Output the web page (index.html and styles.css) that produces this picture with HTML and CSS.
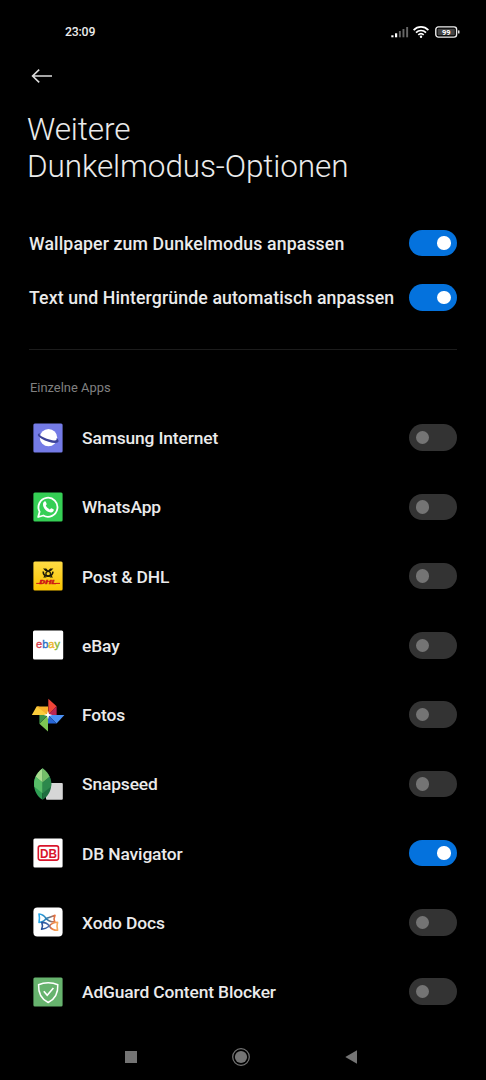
FILE: index.html
```html
<!DOCTYPE html>
<html lang="de">
<head>
    <meta charset="UTF-8">
    <meta name="viewport" content="width=device-width, initial-scale=1.0">
    <title>Weitere Dunkelmodus-Optionen</title>
    <link rel="stylesheet" href="styles.css">
</head>
<body>
    <div class="status-bar">
        <span class="time">23:09</span>
        <div class="status-icons">
            <svg width="18" height="12" viewBox="0 0 18 12">
                <rect x="0.3" y="9.3" width="2.2" height="2" fill="#fff"/>
                <rect x="4" y="7.3" width="2.2" height="4" fill="#fff"/>
                <rect x="7.9" y="5" width="1.9" height="6.3" fill="#666"/>
                <rect x="11.5" y="3" width="1.9" height="8.3" fill="#666"/>
                <rect x="15.2" y="1" width="1.9" height="10.3" fill="#666"/>
            </svg>
            <svg class="wifi" width="16" height="12" viewBox="0 0 16 12">
                <g fill="none" stroke="#fff" stroke-width="1.7">
                    <path d="M0.6 4.1C4.8 -0.2 11.2 -0.2 15.4 4.1"/>
                    <path d="M3 6.6C5.8 3.8 10.2 3.8 13 6.6"/>
                    <path d="M5.3 8.9C6.9 7.4 9.1 7.4 10.7 8.9"/>
                </g>
                <circle cx="8" cy="10.7" r="1.2" fill="#fff"/>
            </svg>
            <svg class="battery" width="25" height="12" viewBox="0 0 25 12">
                <rect x="0.8" y="0.9" width="20.8" height="10.2" rx="2.6" fill="none" stroke="#eee" stroke-width="1.4"/>
                <rect x="2.6" y="2.7" width="17.2" height="6.6" rx="0.8" fill="#444"/>
                <rect x="23" y="4.3" width="1.5" height="3.2" rx="0.6" fill="#ddd"/>
                <text x="11.2" y="8.6" text-anchor="middle" class="battery-text">99</text>
            </svg>
        </div>
    </div>

    <div class="header">
        <svg class="back" width="22" height="16" viewBox="0 0 22 16">
            <path d="M21 8H1.8M8.2 1.6L1.6 8L8.2 14.4" fill="none" stroke="#ddd" stroke-width="1.6"/>
        </svg>
        <h1>Weitere<br>Dunkelmodus-Optionen</h1>
    </div>

    <div class="options">
        <div class="option"><span>Wallpaper zum Dunkelmodus anpassen</span><div class="toggle on"></div></div>
        <div class="option"><span>Text und Hintergründe automatisch anpassen</span><div class="toggle on"></div></div>
    </div>

    <h2>Einzelne Apps</h2>

    <div class="apps">
        <div class="app">
            <svg width="34" height="34" viewBox="0 0 34 34">
                <rect x="2.4" y="2.4" width="29.2" height="29.2" rx="1.5" fill="#747be6"/>
                <circle cx="17.5" cy="16.6" r="8.7" fill="#fff"/>
                <path d="M9.2 12.6C5.6 12.4 6.2 15.2 10.6 17.8C16 21 24.5 23.2 27 21.3C28.4 20.2 27.3 18.4 25.3 17C26.2 18.8 25.4 19.6 23 19.4C18.5 19.1 12.8 17 9.6 14.8C8.4 13.9 8.3 13.1 9.2 12.6Z" fill="#3d4398"/>
            </svg>
            <span>Samsung Internet</span><div class="toggle"></div>
        </div>
        <div class="app">
            <svg width="34" height="34" viewBox="0 0 34 34">
                <rect x="2.4" y="2.4" width="29.2" height="29.2" rx="1.5" fill="#35cf55"/>
                <path d="M7.2 27L8.6 21.7A9.5 9.5 0 1 1 12.3 25.5Z" fill="none" stroke="#fff" stroke-width="1.8" stroke-linejoin="round"/>
                <path d="M13.4 11.6C14.1 11.1 14.6 11.3 14.9 12L15.7 13.9C15.9 14.5 15 15 14.8 15.6C15.6 17.4 16.9 18.6 18.7 19.4C19.4 19.1 19.8 18.1 20.4 18.2L22.5 19.3C23.3 19.8 22.4 22.3 19.9 22.5C16 22.4 12 18.3 12 14.6C12 13.3 12.5 12.2 13.4 11.6Z" fill="#fff"/>
            </svg>
            <span>WhatsApp</span><div class="toggle"></div>
        </div>
        <div class="app">
            <svg width="34" height="34" viewBox="0 0 34 34">
                <defs>
                    <linearGradient id="post" x1="0" y1="0" x2="0" y2="1"><stop offset="0" stop-color="#ffdc45"/><stop offset="1" stop-color="#fbc400"/></linearGradient>
                </defs>
                <rect x="2.4" y="2.4" width="29.2" height="29.2" rx="1.5" fill="url(#post)"/>
                <path d="M12 9.6H15.2L17.1 11.6L19.2 9.6H22.4L20 12.1H14.3Z" fill="#1d1a08"/>
                <path d="M12.2 12.6C12.2 15.8 14 17.2 16.8 17.2C19.8 17.2 21.6 15.6 22 12.6" fill="none" stroke="#1d1a08" stroke-width="1.6"/>
                <circle cx="17.2" cy="14.7" r="2.3" fill="none" stroke="#1d1a08" stroke-width="1.3"/>
                <path d="M13.6 16.6L12.2 18.6H15.6ZM20.4 16.6L22 18.6H18.6Z" fill="#1d1a08"/>
                <path d="M5.2 24.4H9.8M24.6 24.4H29" stroke="#cf1515" stroke-width="1"/>
                <text x="8.6" y="25.3" textLength="16.6" lengthAdjust="spacingAndGlyphs" class="dhl">DHL</text>
            </svg>
            <span>Post &amp; DHL</span><div class="toggle"></div>
        </div>
        <div class="app">
            <svg width="34" height="34" viewBox="0 0 34 34">
                <rect x="2" y="2.4" width="30.2" height="29.2" rx="1.5" fill="#fff"/>
                <text x="5" y="19.8" textLength="24" lengthAdjust="spacingAndGlyphs" class="ebay"><tspan fill="#d83c4b">e</tspan><tspan fill="#2c6fc4">b</tspan><tspan fill="#eeb52c">a</tspan><tspan fill="#8ab62f">y</tspan></text>
            </svg>
            <span>eBay</span><div class="toggle"></div>
        </div>
        <div class="app">
            <svg width="34" height="34" viewBox="0 0 34 34">
                <path d="M17.3 0.8V17L25.6 8.2Z" fill="#ef4438"/>
                <path d="M17 17L25.6 8.2V17Z" fill="#b92655"/>
                <path d="M33.4 17H17L25.6 25.6Z" fill="#4b91f5"/>
                <path d="M17 17L25.6 25.6H17Z" fill="#2765d6"/>
                <path d="M17 33.4V17L8.4 25.8Z" fill="#7cc653"/>
                <path d="M17 17L8.4 25.8V17Z" fill="#40954a"/>
                <path d="M0.8 17H17L8 8.6H5.6Z" fill="#fccd3c"/>
                <path d="M17 17L5.6 8.6H17Z" fill="#f7b02b"/>
                <path d="M17 12.8L18 16L21.2 17L18 18L17 21.2L16 18L12.8 17L16 16Z" fill="#fff"/>
            </svg>
            <span>Fotos</span><div class="toggle"></div>
        </div>
        <div class="app">
            <svg width="34" height="34" viewBox="0 0 34 34">
                <rect x="15" y="16" width="16.8" height="16.8" rx="1" fill="#d6d6d6"/>
                <path d="M11.6 1.3C5.5 6 2.9 11.5 3 17C3.1 24 6.3 29.5 11.6 32.8Z" fill="#2f9e54"/>
                <path d="M11.6 1.3C17.8 6 20.4 11.5 20.3 17C20.2 24 17 29.5 11.6 32.8Z" fill="#1e6f40"/>
                <path d="M11.6 1.3C8.3 3.9 6 6.8 4.6 9.7L11.6 15.6Z" fill="#a7dc8e"/>
                <path d="M11.6 1.3C15 3.9 17.2 6.8 18.6 9.7L11.6 15.6Z" fill="#73bd68"/>
                <path d="M4.6 9.7C3.1 12.8 2.7 16.3 3.3 19.7L11.6 26.3V15.6Z" fill="#58bd68"/>
                <path d="M18.6 9.7C20.3 12.8 20.6 16.3 20 19.7L11.6 26.3V15.6Z" fill="#2c884c"/>
            </svg>
            <span>Snapseed</span><div class="toggle"></div>
        </div>
        <div class="app">
            <svg width="34" height="34" viewBox="0 0 34 34">
                <rect x="2.4" y="2.4" width="29.2" height="29.2" rx="1.5" fill="#fff"/>
                <rect x="7.3" y="9.9" width="20.2" height="14.2" rx="2" fill="none" stroke="#d9152b" stroke-width="1.6"/>
                <text x="8.9" y="21.6" textLength="17" lengthAdjust="spacingAndGlyphs" class="db">DB</text>
            </svg>
            <span>DB Navigator</span><div class="toggle on"></div>
        </div>
        <div class="app">
            <svg width="34" height="34" viewBox="0 0 34 34">
                <defs>
                    <linearGradient id="xodo1" x1="0" y1="0" x2="1" y2="0"><stop offset="0" stop-color="#27a9ec"/><stop offset="0.55" stop-color="#3177a8"/><stop offset="1" stop-color="#f0713a"/></linearGradient>
                    <linearGradient id="xodo2" x1="0" y1="0" x2="1" y2="0"><stop offset="0" stop-color="#25509a"/><stop offset="0.45" stop-color="#496cae"/><stop offset="0.6" stop-color="#e8743b"/><stop offset="1" stop-color="#f7aa5b"/></linearGradient>
                </defs>
                <rect x="2.4" y="2.4" width="29.2" height="29.2" rx="4" fill="#fff"/>
                <g fill="none" stroke-width="1.6" stroke-linejoin="round">
                    <path d="M8 9C11 9.2 13 10.4 15 13.4C17.3 12.8 20.5 11.8 24 10.3C22.8 12.7 22.8 14.7 23.8 16.8C20 16.9 17 15.8 15 13.4C13.8 15.8 11.6 17.1 8 17.4C8.7 14.5 8.7 12 8 9Z" stroke="url(#xodo1)"/>
                    <path d="M10.8 17.4C14 17.3 16.6 18.7 18.4 21C19.8 18.9 22.5 17.4 26.6 17.2C25.7 20 25.8 22.5 26.6 25.3C22.8 25.3 20 23.8 18.4 21C16.3 22.8 13.8 23.7 10.6 24.3C11.7 21.8 11.8 19.7 10.8 17.4Z" stroke="url(#xodo2)"/>
                </g>
            </svg>
            <span>Xodo Docs</span><div class="toggle"></div>
        </div>
        <div class="app">
            <svg width="34" height="34" viewBox="0 0 34 34">
                <rect x="2.4" y="2.4" width="29.2" height="29.2" rx="1.5" fill="#67b36e"/>
                <path d="M17.2 7.8C20.5 7.8 24 8.5 26.8 9.8C27.2 18 24.5 24 17.2 27.5C9.9 24 7.2 18 7.6 9.8C10.4 8.5 13.9 7.8 17.2 7.8Z" fill="none" stroke="#fff" stroke-width="1.5"/>
                <path d="M12.8 16.2L16.2 20.2L22.4 12.9" fill="none" stroke="#fff" stroke-width="1.6"/>
            </svg>
            <span>AdGuard Content Blocker</span><div class="toggle"></div>
        </div>
    </div>

    <div class="nav-bar">
        <svg width="12" height="12" viewBox="0 0 12 12"><rect width="12" height="12" fill="#747474"/></svg>
        <svg width="18" height="18" viewBox="0 0 18 18">
            <circle cx="9" cy="9" r="8.3" fill="none" stroke="#747474" stroke-width="1.2"/>
            <circle cx="9" cy="9" r="6.1" fill="#747474"/>
        </svg>
        <svg width="12" height="14" viewBox="0 0 12 14"><path d="M12 0.3V13.7L0.3 7Z" fill="#747474"/></svg>
    </div>
</body>
</html>
```

FILE: styles.css
```css
body {
    margin: 0;
    height: 1080px;
    box-sizing: border-box;
    background-color: #000;
    color: #ebebeb;
    font-family: Roboto, sans-serif;
    overflow: hidden;
}
svg {
    display: block;
    flex-shrink: 0;
}
.status-bar {
    display: flex;
    justify-content: space-between;
    align-items: center;
    height: 63px;
    padding: 0 26px 0 65px;
}
.time {
    font-size: 12.3px;
    font-weight: 500;
    letter-spacing: -0.2px;
}
.status-icons {
    display: flex;
    align-items: center;
}
.wifi {
    margin-left: 4px;
}
.battery {
    margin-left: 6px;
}
.battery-text {
    font-size: 7.5px;
    font-weight: 700;
    fill: #fff;
}
.header {
    padding: 5px 27px 0;
}
.back {
    margin-left: 4px;
}
h1 {
    margin: 27px 0 0;
    font-size: 31.5px;
    font-weight: 300;
    line-height: 37px;
    letter-spacing: -0.12px;
}
.options {
    margin: 31px 29px 0;
    height: 133px;
    border-bottom: 1px solid #1c1c1c;
}
.option {
    display: flex;
    justify-content: space-between;
    align-items: center;
    height: 54.3px;
    font-size: 17.7px;
    font-weight: 500;
    letter-spacing: 0.12px;
    white-space: nowrap;
}
.option span,
.app span {
    padding-top: 1px;
}
.toggle {
    display: flex;
    align-items: center;
    width: 48px;
    height: 26.6px;
    padding: 0 6.5px;
    box-sizing: border-box;
    border-radius: 14px;
    background-color: #333;
    flex-shrink: 0;
}
.toggle::before {
    content: "";
    width: 13.4px;
    height: 13.4px;
    border-radius: 50%;
    background-color: #747474;
}
.toggle.on {
    justify-content: flex-end;
    background-color: #0472dd;
}
.toggle.on::before {
    background-color: #fff;
}
h2 {
    margin: 29px 30px 0;
    font-size: 12.9px;
    font-weight: 400;
    line-height: 18px;
    color: #808080;
}
.apps {
    margin: 6px 29px 0 31px;
}
.app {
    display: flex;
    align-items: center;
    height: 69.25px;
    font-size: 17.4px;
    font-weight: 500;
    letter-spacing: -0.13px;
}
.app span {
    flex: 1;
    margin-left: 17px;
}
.dhl {
    font: italic 900 6px Roboto, sans-serif;
    letter-spacing: 0;
    fill: #cf1515;
    stroke: #cf1515;
    stroke-width: 0.4px;
}
.ebay {
    font: 11.5px "Liberation Sans", Arial, sans-serif;
    letter-spacing: 0;
    stroke-width: 0.4px;
}
.ebay tspan:nth-child(1) {
    stroke: #d83c4b;
}
.ebay tspan:nth-child(2) {
    stroke: #2c6fc4;
}
.ebay tspan:nth-child(3) {
    stroke: #eeb52c;
}
.ebay tspan:nth-child(4) {
    stroke: #8ab62f;
}
.db {
    font: 700 13px "Liberation Sans", Arial, sans-serif;
    letter-spacing: 0;
    fill: #d9152b;
}
.nav-bar {
    display: flex;
    justify-content: space-between;
    align-items: center;
    height: 18px;
    margin: 22px 129px 0 125px;
}
```
